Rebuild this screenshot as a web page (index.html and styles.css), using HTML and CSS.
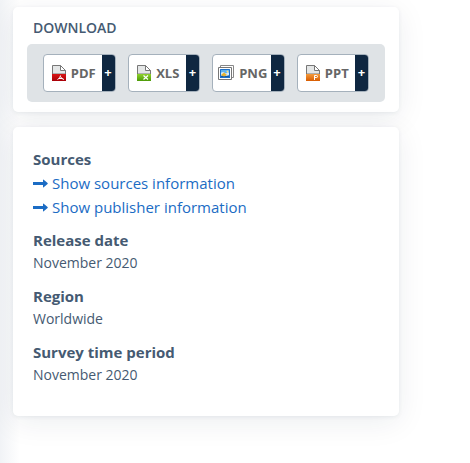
FILE: index.html
```html
<!DOCTYPE html>
<html lang="en">
<head>
<meta charset="utf-8">
<meta name="viewport" content="width=device-width, initial-scale=1">
<title>Download</title>
<link rel="stylesheet" href="styles.css">
</head>
<body>
<svg class="defs" aria-hidden="true">
  <defs>
    <linearGradient id="red" x2="0" y2="1"><stop stop-color="#d81414"/><stop offset="1" stop-color="#a80008"/></linearGradient>
    <linearGradient id="green" x2="0" y2="1"><stop stop-color="#8fd12c"/><stop offset="1" stop-color="#4c9a08"/></linearGradient>
    <linearGradient id="orange" x2="0" y2="1"><stop stop-color="#f39a3c"/><stop offset="1" stop-color="#d85c00"/></linearGradient>
    <symbol id="page" viewBox="0 0 14 16">
      <path d="M.5 9V.5h8l5 5V9z" fill="#e4e6e6" stroke="#777"/>
      <path d="M8.500 .5v5h5z" fill="#fff" stroke="#777"/>
    </symbol>
    <symbol id="arrow" viewBox="0 0 15 9">
      <path d="M0 3h10V1Q10 .1 10.700 .7L14.600 4.100q.4.400 0 .8L10.700 8.300Q10 8.900 10 8V6H0z" fill="currentColor"/>
    </symbol>
  </defs>
</svg>
<aside class="sidebar">
  <section class="card card-download">
    <h2 class="title">DOWNLOAD</h2>
    <div class="formats">
      <button class="format" type="button">
        <span class="label">
          <svg class="icon" viewBox="0 0 14 16" aria-hidden="true"><use href="#page"/><path d="M0 9h14v7H0z" fill="url(#red)"/><path d="M5.500 14.500Q8.500 13 8.500 10.500M8.500 11.500q1 2.500 3.500 3M7 13.500h3.500" fill="none" stroke="#fff"/></svg>
          PDF
        </span>
        <span class="plus">+</span>
      </button>
      <button class="format" type="button">
        <span class="label">
          <svg class="icon" viewBox="0 0 14 16" aria-hidden="true"><use href="#page"/><path d="M0 9h14v7H0z" fill="url(#green)"/><path d="M6.500 10.500l4.500 4M11 10.500l-4.500 4" fill="none" stroke="#fff" stroke-width="1.200"/></svg>
          XLS
        </span>
        <span class="plus">+</span>
      </button>
      <button class="format" type="button">
        <span class="label">
          <svg class="icon icon-wide" viewBox="0 0 16 16" aria-hidden="true"><path d="M2.500 .5h13v12h-13z" fill="#fff" stroke="#888"/><path d="M.5 2.500h13v12H.5z" fill="#fff" stroke="#777"/><path d="M2 4h10v9H2z" fill="#5fb2f0"/><path d="M2 8l3-1 3 1.500L10 7l2 2v2H2z" fill="#d5ecfa"/><path d="M2 13v-2l4-1 2 1 4-1v3z" fill="#1459a6"/><path d="M3 10l3-2.500L9 10l-3 1.500z" fill="#e8b32f"/><circle cx="9.500" cy="6.500" r="1" fill="#ffe27a"/><path d="M2.500 4.500h9v8h-9z" fill="none" stroke="#1c6fc9"/></svg>
          PNG
        </span>
        <span class="plus">+</span>
      </button>
      <button class="format" type="button">
        <span class="label">
          <svg class="icon" viewBox="0 0 14 16" aria-hidden="true"><use href="#page"/><path d="M0 9h14v7H0z" fill="url(#orange)"/><path d="M8.500 15v-4.500h2q1 0 1 1t-1 1h-2" fill="none" stroke="#fff"/></svg>
          PPT
        </span>
        <span class="plus">+</span>
      </button>
    </div>
  </section>
  <section class="card card-details">
    <h3 class="heading">Sources</h3>
    <a class="link" href="#sources"><svg class="arrow" aria-hidden="true"><use href="#arrow"/></svg>Show sources information</a>
    <a class="link" href="#publisher"><svg class="arrow" aria-hidden="true"><use href="#arrow"/></svg>Show publisher information</a>
    <h3 class="heading">Release date</h3>
    <p class="value">November 2020</p>
    <h3 class="heading">Region</h3>
    <p class="value">Worldwide</p>
    <h3 class="heading">Survey time period</h3>
    <p class="value">November 2020</p>
  </section>
</aside>
</body>
</html>
```
FILE: styles.css
```css
* { box-sizing: border-box; }
body {
  margin: 0;
  background: linear-gradient(to right, #f1f3f6, #fff 20px);
  color: #455a72;
  font-family: "Open Sans", "Noto Sans", sans-serif;
}
.defs { position: absolute; width: 0; height: 0; }
.sidebar {
  display: flex;
  flex-direction: column;
  gap: 15px;
  max-width: 399px;
  padding: 7px 0 40px 13px;
}
.card {
  background: #fff;
  border-radius: 5px;
  box-shadow: 0 6px 30px rgba(15, 39, 65, .08), 0 1px 4px rgba(15, 39, 65, .07);
}
.card-download { padding: 10px 14px; }
.card-details { padding: 21px 20px 29px; }
.title {
  margin: 0 6px 5px;
  font-size: 14px;
  font-weight: 600;
  line-height: 22px;
}
.formats {
  display: flex;
  gap: 12px;
  padding: 10px 16px;
  border-radius: 5px;
  background: #dfe3e6;
}
.format {
  display: flex;
  flex: 1 1 0;
  height: 38px;
  padding: 0;
  border: 1px solid #a5b1bc;
  border-radius: 4px;
  overflow: hidden;
  background: #fff;
  color: #666;
  font-family: inherit;
  font-size: 13px;
  font-weight: 700;
  cursor: pointer;
}
.label {
  display: flex;
  flex: 1;
  align-items: center;
  justify-content: center;
  gap: 5px;
  height: 100%;
  padding-left: 2px;
}
.icon { width: 14px; height: 16px; flex: none; }
.icon-wide { width: 16px; }
.plus {
  width: 13px;
  height: 100%;
  background: #0f2741;
  color: #fff;
  font-size: 13px;
  line-height: 34px;
  text-align: center;
}
.heading {
  margin: 10px 0 0;
  font-size: 15px;
  font-weight: 700;
  line-height: 22px;
}
.heading:first-child { margin: 0 0 1px; }
.link {
  display: flex;
  align-items: center;
  gap: 4px;
  color: #1b6cc4;
  font-size: 15px;
  line-height: 24px;
  text-decoration: none;
}
.arrow { width: 15px; height: 9px; }
.value {
  margin: 0;
  font-size: 14px;
  line-height: 24px;
}
```
